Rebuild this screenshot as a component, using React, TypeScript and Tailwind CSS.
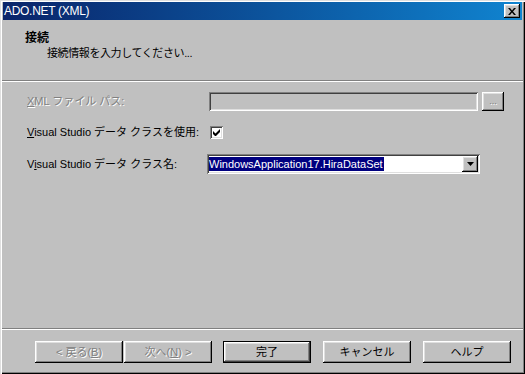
const raised =
  'shadow-[inset_-1px_-1px_#000,inset_1px_1px_#fff,inset_-2px_-2px_#808080,inset_2px_2px_#dfdfdf]'
const sunken =
  'shadow-[inset_1px_1px_#808080,inset_-1px_-1px_#fff,inset_2px_2px_#404040,inset_-2px_-2px_#dfdfdf]'
const disabledText = 'text-[#808080] [text-shadow:1px_1px_0_#fff]'

function WizButton({ children, disabled, isDefault }: { children: React.ReactNode; disabled?: boolean; isDefault?: boolean }) {
  const frame = isDefault
    ? 'shadow-[inset_0_0_0_1px_#000,inset_-2px_-2px_#404040,inset_2px_2px_#fff,inset_-3px_-3px_#808080,inset_3px_3px_#dfdfdf]'
    : raised
  return (
    <div
      className={`w-[88px] h-[22px] flex items-center justify-center whitespace-nowrap bg-[#c0c0c0] ${frame} ${disabled ? disabledText : 'text-black'}`}
    >
      {children}
    </div>
  )
}

export default function App() {
  return (
    <div
      className="w-[525px] h-[374px] bg-[#c0c0c0] flex flex-col pt-[2px] pb-[2px] px-[2px] shadow-[inset_1px_1px_#dfdfdf,inset_2px_2px_#fff,inset_-1px_-1px_#000,inset_-2px_-2px_#808080] text-[11px] leading-[13px] text-black overflow-hidden whitespace-nowrap"
      style={{ fontFamily: '"Liberation Sans", "Noto Sans CJK JP", sans-serif' }}
    >
      {/* title bar */}
      <div className="h-[18px] ml-[1px] mr-[1px] flex items-center justify-between bg-linear-to-r from-[#0a246a] to-[#1084d0]">
        <span className="text-white pl-[1px] text-[12px] tracking-[-0.3px]">ADO.NET (XML)</span>
        <div className={`w-[16px] h-[14px] mr-[2px] bg-[#c0c0c0] flex items-center justify-center ${raised}`}>
          <svg width="8" height="7" viewBox="0 0 8 7">
            <path d="M0 0h2l2 2.5L6 0h2L5 3.5 8 7H6L4 4.5 2 7H0l3-3.5z" fill="#000" />
          </svg>
        </div>
      </div>

      {/* header */}
      <div className="h-[60px] pl-[23px] pt-[11px] text-[12px] leading-[14px]">
        <div className="font-bold">接続</div>
        <div className="pl-[22px] mt-[1px] text-[11px] tracking-[-0.4px]">接続情報を入力してください...</div>
      </div>
      <div className="h-[2px] border-t border-[#808080] border-b border-b-white" />

      {/* content */}
      <div className="flex-1 pt-[10px] pl-[25px] flex flex-col">
        <div className="flex items-center h-[19px]">
          <div className={`w-[182px] shrink-0 ${disabledText}`}>
            <span className="underline">X</span>ML ファイル パス:
          </div>
          <div className={`w-[269px] h-[19px] bg-[#c0c0c0] ${sunken}`} />
          <div className={`ml-[4px] w-[22px] h-[19px] flex items-center justify-center ${raised}`}>
            <span className={`text-[9px] leading-[9px] ${disabledText}`}>...</span>
          </div>
        </div>

        <div className="flex items-center h-[13px] mt-[15px]">
          <div className="w-[182px] shrink-0">
            <span className="underline">V</span>isual Studio データ クラスを使用:
          </div>
          <div className={`ml-[1px] w-[13px] h-[13px] bg-white flex items-center justify-center ${sunken}`}>
            <svg width="7" height="7" viewBox="0 0 7 7">
              <path d="M0 2v3l2 2h1l4-4V0L2.5 4.5z" fill="#000" />
            </svg>
          </div>
        </div>

        <div className="flex items-center h-[20px] mt-[15px]">
          <div className="w-[182px] shrink-0">
            V<span className="underline">i</span>sual Studio データ クラス名:
          </div>
          <div className={`-ml-[2px] w-[273px] h-[20px] bg-white flex items-center pl-[2px] pr-[2px] ${sunken}`}>
            <span className="bg-[#000080] text-white h-[14px] leading-[14px] pr-[1px]">WindowsApplication17.HiraDataSet</span>
            <div className={`ml-auto w-[16px] h-[16px] bg-[#c0c0c0] flex items-center justify-center ${raised}`}>
              <svg width="7" height="4" viewBox="0 0 7 4">
                <path d="M0 0h7L3.5 4z" fill="#000" />
              </svg>
            </div>
          </div>
        </div>
      </div>

      {/* footer */}
      <div className="h-[2px] border-t border-[#808080] border-b border-b-white" />
      <div className="h-[42px] flex pt-[11px] pl-[33px]">
        <WizButton disabled>
          &lt; 戻る(<span className="underline">B</span>)
        </WizButton>
        <div className="ml-[1px]">
          <WizButton disabled>
            次へ(<span className="underline">N</span>) &gt;
          </WizButton>
        </div>
        <div className="ml-[11px]">
          <WizButton isDefault>完了</WizButton>
        </div>
        <div className="ml-[12px]">
          <WizButton>キャンセル</WizButton>
        </div>
        <div className="ml-[12px]">
          <WizButton>ヘルプ</WizButton>
        </div>
      </div>
    </div>
  )
}
